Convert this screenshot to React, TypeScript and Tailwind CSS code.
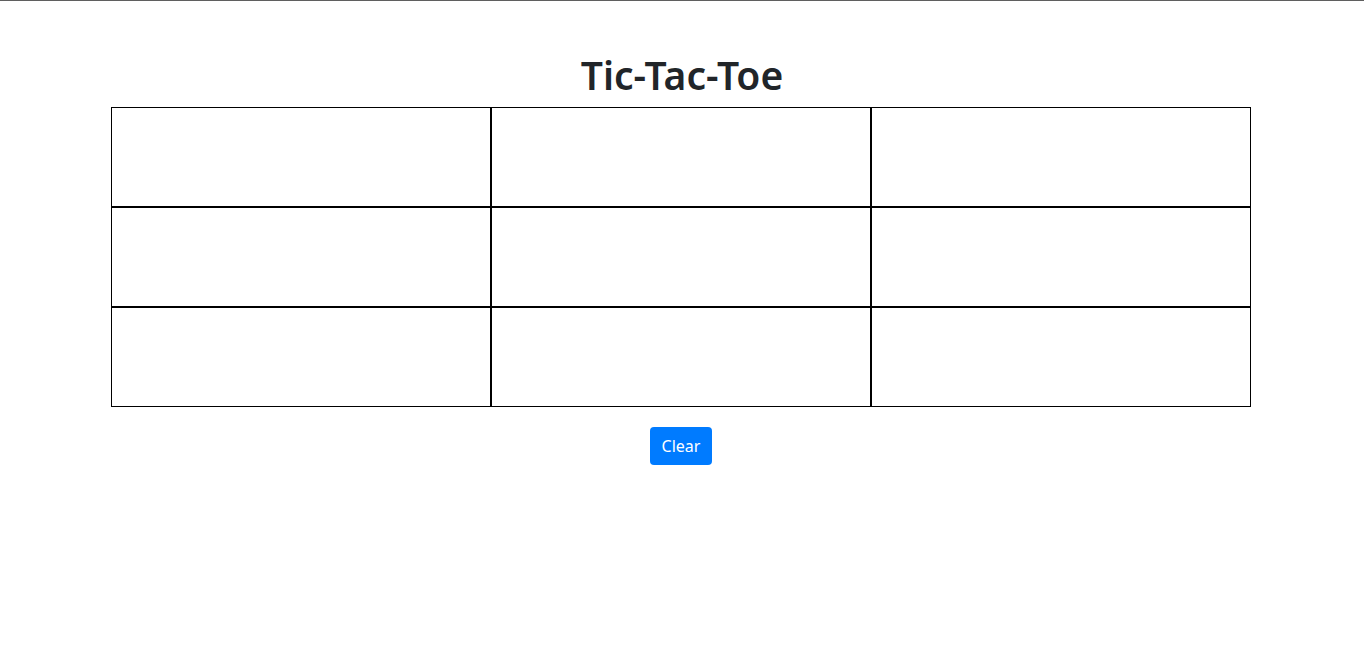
const cells = Array.from({ length: 9 });

export default function App() {
  return (
    <div
      className="min-h-screen bg-white border-t border-[#5f5f5f] pt-[50px] text-[#212529]"
      style={{ fontFamily: '"Noto Sans", "Open Sans", sans-serif' }}
    >
      <h1 className="text-center text-[39px] leading-[48px] font-semibold mb-2">Tic-Tac-Toe</h1>
      <div className="flex justify-center">
        <div className="grid grid-cols-[repeat(3,380px)] mr-[2px]">
          {cells.map((_, i) => (
            <div key={i} className="h-[100px] border border-black bg-white" />
          ))}
        </div>
      </div>
      <div className="flex justify-center mt-5 mr-[2px]">
        <button className="bg-[#007bff] text-white text-base leading-6 px-3 py-[7px] rounded">
          Clear
        </button>
      </div>
    </div>
  );
}
